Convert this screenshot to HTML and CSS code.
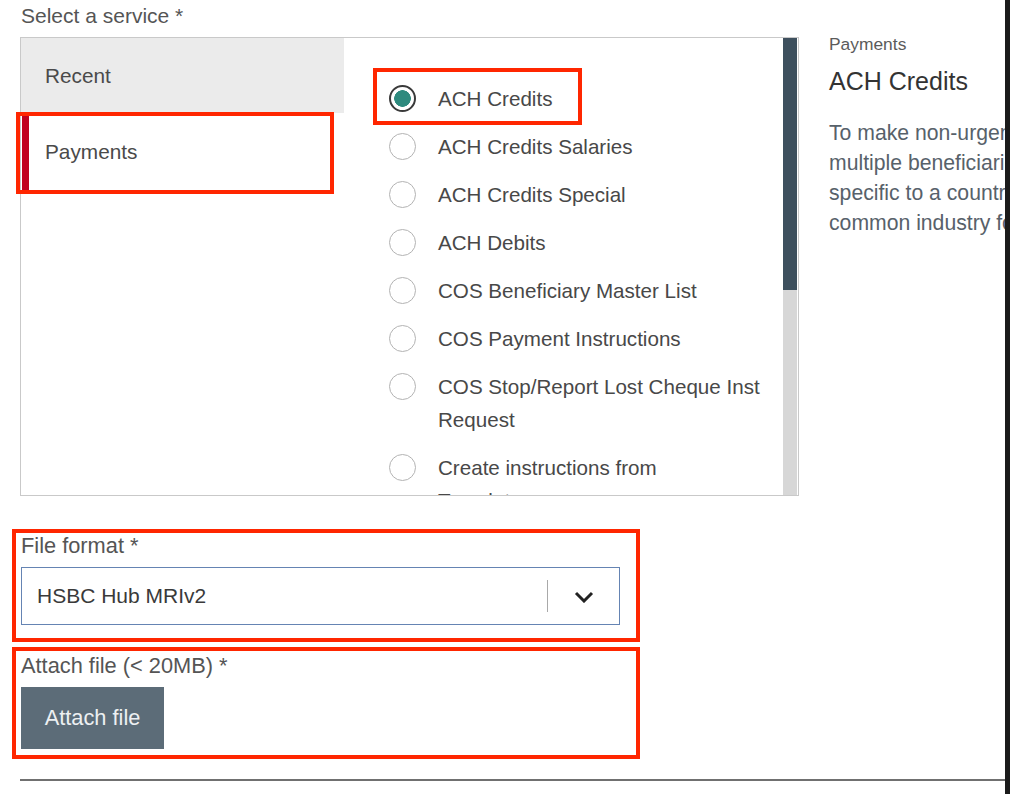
FILE: index.html
```html
<!DOCTYPE html>
<html lang="en">
<head>
    <meta charset="UTF-8">
    <meta name="viewport" content="width=device-width, initial-scale=1.0">
    <title>Upload file</title>
    <link rel="stylesheet" href="styles.css">
</head>
<body>

<div class="frame">
    <div class="page">
        <div class="top">
            <div class="service-col">
                <div class="field-label">Select a service *</div>
                <div class="service-box">
                    <div class="cats">
                        <div class="cat">Recent</div>
                        <div class="cat cat-active marked">Payments</div>
                    </div>
                    <div class="services">
                        <ul class="radio-list">
                            <li class="radio checked marked-item"><span class="dot"></span><span class="radio-text">ACH Credits</span></li>
                            <li class="radio"><span class="dot"></span><span class="radio-text">ACH Credits Salaries</span></li>
                            <li class="radio"><span class="dot"></span><span class="radio-text">ACH Credits Special</span></li>
                            <li class="radio"><span class="dot"></span><span class="radio-text">ACH Debits</span></li>
                            <li class="radio"><span class="dot"></span><span class="radio-text">COS Beneficiary Master List</span></li>
                            <li class="radio"><span class="dot"></span><span class="radio-text">COS Payment Instructions</span></li>
                            <li class="radio"><span class="dot"></span><span class="radio-text">COS Stop/Report Lost Cheque Inst<br>Request</span></li>
                            <li class="radio"><span class="dot"></span><span class="radio-text">Create instructions from<br>Template</span></li>
                            <li class="radio"><span class="dot"></span><span class="radio-text">Direct Debits</span></li>
                        </ul>
                    </div>
                    <div class="scrollbar"><div class="thumb"></div></div>
                </div>
            </div>
            <div class="info">
                <div class="info-cat">Payments</div>
                <h3 class="info-title">ACH Credits</h3>
                <p class="info-text">To make non-urgent payments to<br>multiple beneficiaries in a format<br>specific to a country or in a<br>common industry format.</p>
            </div>
        </div>

        <div class="field marked-field">
            <div class="field-label big">File format *</div>
            <div class="select">
                <span class="select-value">HSBC Hub MRIv2</span>
                <span class="select-sep"></span>
                <svg class="chevron" width="20" height="12" viewBox="0 0 20 12"><path d="M2 2 L10 10 L18 2" fill="none" stroke="#222" stroke-width="3"/></svg>
            </div>
        </div>

        <div class="field marked-attach">
            <div class="field-label big">Attach file (&lt; 20MB) *</div>
            <button class="attach-btn">Attach file</button>
        </div>

        <div class="rule"></div>
    </div>
    <div class="edge"></div>
</div>

</body>
</html>
```

FILE: styles.css
```css
body {
    font-family: "Liberation Sans", Arial, sans-serif;
    margin: 0;
    background: #fff;
    color: #444;
}
.frame {
    display: flex;
    height: 794px;
    overflow: hidden;
}
.page {
    width: 1005px;
    flex: none;
    padding: 4px 0 0 20px;
    box-sizing: border-box;
    overflow: hidden;
}
.edge {
    flex: 1;
    background: #1b1b1b;
}
.top {
    display: flex;
}
.service-col {
    width: 779px;
    flex: none;
}
.field-label {
    font-size: 21px;
    line-height: 24px;
    color: #555;
    margin-bottom: 9px;
    padding-left: 1px;
}
.field-label.big {
    font-size: 21.8px;
}
.service-box {
    display: flex;
    height: 459px;
    border: 1px solid #c9c9c9;
    box-sizing: border-box;
}
.cats {
    width: 323px;
    flex: none;
}
.cat {
    height: 75px;
    display: flex;
    align-items: center;
    padding-left: 24px;
    font-size: 20.8px;
    color: #4a4a4a;
    background: #ebebeb;
}
.cat-active {
    position: relative;
    height: 76px;
    margin-top: 1px;
    margin-left: 1px;
    background: #fff;
    border-left: 7px solid #c1001d;
    padding-left: 16px;
}
.marked::after {
    content: "";
    position: absolute;
    top: -2px;
    left: -13px;
    right: 10px;
    bottom: -4px;
    border: 4px solid #ff2600;
}
.services {
    width: 439px;
    flex: none;
    overflow: hidden;
}
.radio-list {
    list-style: none;
    margin: 0;
    padding: 44px 0 0 45px;
}
.radio {
    position: relative;
    display: flex;
    gap: 22px;
    margin-bottom: 15px;
    font-size: 20.6px;
    line-height: 33px;
    color: #484848;
    white-space: nowrap;
}
.dot {
    width: 27px;
    height: 27px;
    margin-top: 3px;
    flex: none;
    border: 1.5px solid #b3b3b3;
    border-radius: 50%;
    box-sizing: border-box;
}
.checked .dot {
    border: 2px solid #3a3a3a;
    background: radial-gradient(circle, #2e8a7e 0 8px, #fff 8.6px);
}
.marked-item::after {
    content: "";
    position: absolute;
    top: -14px;
    left: -16px;
    width: 209px;
    height: 57px;
    box-sizing: border-box;
    border: 4.5px solid #ff2600;
}
.scrollbar {
    width: 14px;
    flex: none;
    background: #d7d7d7;
}
.thumb {
    height: 252px;
    background: #3e505e;
}
.info {
    margin-left: 30px;
    padding-top: 29px;
    white-space: nowrap;
}
.info-cat {
    font-size: 17.4px;
    line-height: 22px;
    color: #5b5b5b;
}
.info-title {
    margin: 11px 0 0;
    font-size: 25px;
    line-height: 30px;
    font-weight: normal;
    color: #333;
}
.info-text {
    margin: 22px 0 0;
    font-size: 21.2px;
    line-height: 30px;
    color: #57616a;
}
.field {
    position: relative;
    width: 600px;
}
.marked-field {
    margin-top: 38px;
}
.marked-attach {
    margin-top: 29px;
}
.marked-field::after,
.marked-attach::after {
    content: "";
    position: absolute;
    left: -8px;
    right: -20px;
    border: 4px solid #ff2600;
}
.marked-field::after {
    top: -5px;
    bottom: -17px;
}
.marked-attach::after {
    top: -7px;
    bottom: -10px;
}
.select {
    display: flex;
    align-items: center;
    height: 58px;
    margin-left: 1px;
    border: 1.5px solid #6584b3;
    box-sizing: border-box;
    padding-left: 15px;
}
.select-value {
    flex: 1;
    font-size: 21px;
    color: #3a3a3a;
}
.select-sep {
    width: 1px;
    height: 32px;
    background: #a9a9a9;
}
.chevron {
    margin: 2px 25px 0 26px;
}
.attach-btn {
    display: block;
    width: 143px;
    height: 62px;
    margin-left: 1px;
    padding: 0;
    border: none;
    background: #5c6c78;
    color: #edf0f2;
    font-family: inherit;
    font-size: 21.8px;
}
.rule {
    height: 0;
    margin-top: 30px;
    border-top: 2px solid #707070;
}
```
